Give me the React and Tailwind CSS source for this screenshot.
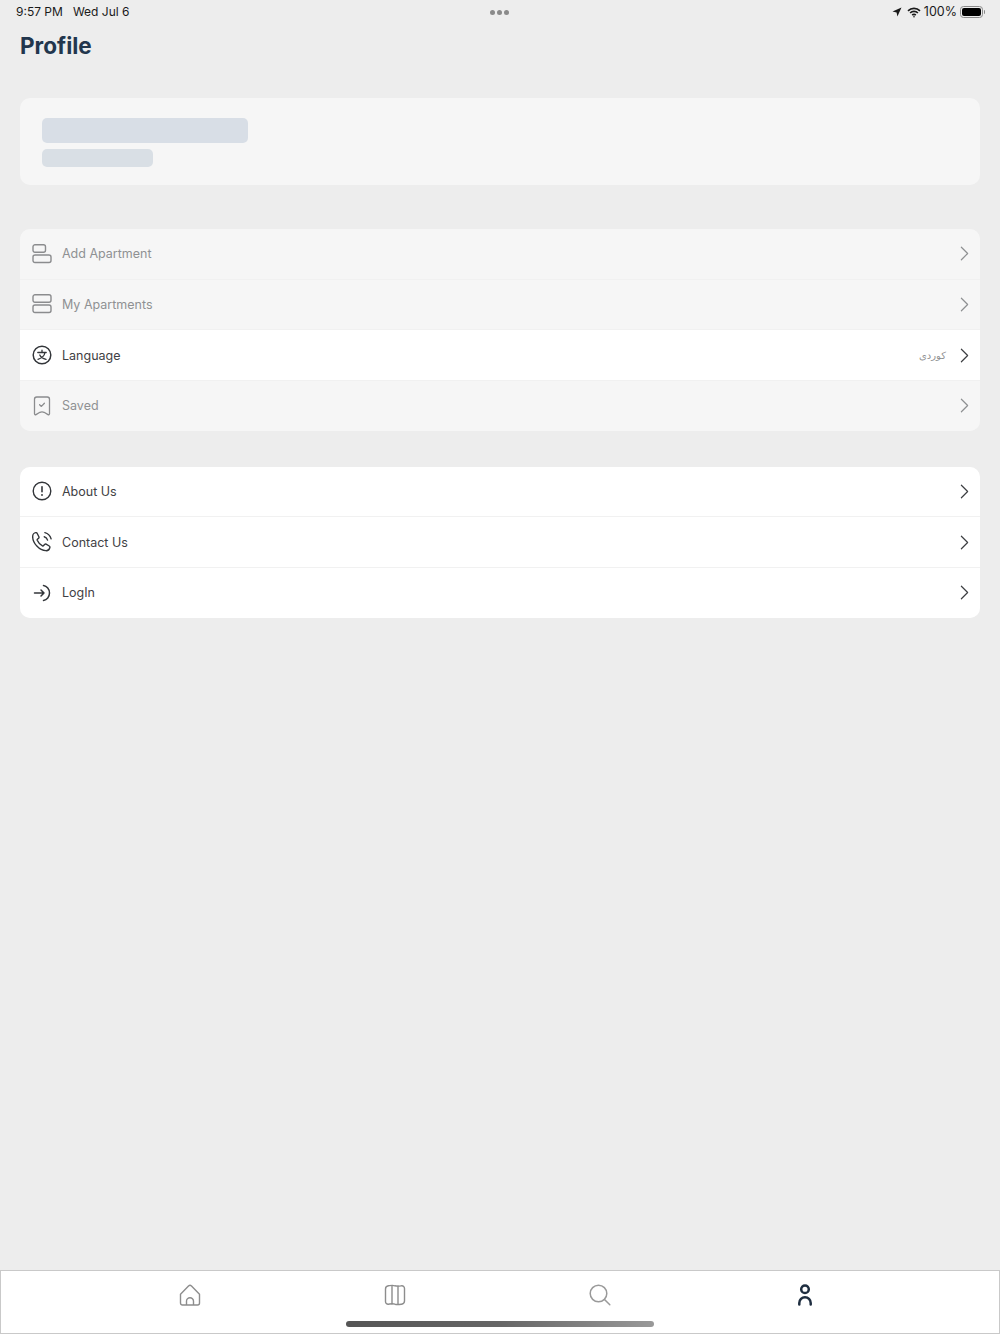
import React from "react";
import { ChevronRight } from "lucide-react";

const font = { fontFamily: "Inter, sans-serif" };

// Icons drawn to match the reference strokes
const AddIcon = () => (
  <svg width="20" height="20" viewBox="0 0 20 20" fill="none" stroke="currentColor" strokeWidth="1.4">
    <rect x="1" y="0.8" width="12.5" height="7.5" rx="2" />
    <rect x="1" y="11" width="18" height="7.5" rx="2" />
  </svg>
);
const ListIcon = () => (
  <svg width="20" height="20" viewBox="0 0 20 20" fill="none" stroke="currentColor" strokeWidth="1.4">
    <rect x="1" y="0.8" width="18" height="7.5" rx="2" />
    <rect x="1" y="11" width="18" height="7.5" rx="2" />
  </svg>
);
const LangIcon = () => (
  <svg width="20" height="20" viewBox="0 0 20 20" fill="none" stroke="currentColor" strokeWidth="1.5" strokeLinecap="round">
    <circle cx="10" cy="10" r="8.8" />
    <path d="M5.800 7.500h8.400M10 5.200v2.300M13 7.500c-.6 3.200-3 5.600-7 6.800M7.800 10c1 2.200 3.200 3.700 6.200 4.300" strokeWidth="1.300" />
  </svg>
);
const SavedIcon = () => (
  <svg width="20" height="20" viewBox="0 0 20 20" fill="none" stroke="currentColor" strokeWidth="1.3" strokeLinejoin="round" strokeLinecap="round">
    <path d="M2.500 3.200A2.200 2.200 0 0 1 4.700 1h10.600a2.200 2.200 0 0 1 2.200 2.200v14.600c0 .8-.8 1.200-1.500.8l-3.900-2.300a5 5 0 0 0-4.200 0l-3.900 2.300c-.7.400-1.500 0-1.500-.8z" />
    <path d="M7.600 8.800l1.800 1.600 3-3.200" />
  </svg>
);
const AboutIcon = () => (
  <svg width="20" height="20" viewBox="0 0 20 20" fill="none" stroke="currentColor" strokeWidth="1.4" strokeLinecap="round">
    <circle cx="10" cy="10" r="8.800" />
    <path d="M10 5.800v5" strokeWidth="1.600" />
    <path d="M10 13.800v.2" strokeWidth="1.800" />
  </svg>
);
const PhoneIcon = () => (
  <svg width="20" height="20" viewBox="1 1 18 18" fill="none" stroke="currentColor" strokeWidth="1.250" strokeLinecap="round" strokeLinejoin="round">
    <path d="M1.600 5.200C1.600 3 3.200 1.600 4.600 1.600c.5 0 .9.3 1.100.7l1.500 3c.2.500.1 1-.3 1.300l-1 .9c-.3.3-.3.700-.2 1 .9 2.100 2.600 3.900 4.700 4.900.4.2.8.1 1-.2l1-1c.4-.4.9-.4 1.300-.2l2.800 1.600c.5.3.7.8.6 1.200-.3 1.600-1.700 3.200-3.700 3C7.700 17.800 1.600 11 1.600 5.200z" />
    <path d="M12 5.300c1.500.5 2.600 1.600 3 3M12.600 1.600c2.700.8 4.800 2.900 5.600 5.600" />
  </svg>
);
const LoginIcon = () => (
  <svg width="20" height="20" viewBox="0 0 20 20" fill="none" stroke="currentColor" strokeWidth="1.500" strokeLinecap="round" strokeLinejoin="round">
    <path d="M2.500 10h9.500M9 7l3 3-3 3" />
    <path d="M11.500 2.600c3.400.5 6 3.600 6 7.400s-2.600 6.900-6 7.400" />
  </svg>
);

const HomeIcon = () => (
  <svg width="22" height="22" viewBox="0 0 22 22" fill="none" stroke="currentColor" strokeWidth="1.400" strokeLinejoin="round">
    <path d="M1.500 10.300 9.500 2c.9-.8 2.100-.8 3 0l8 8.300v8.800c0 1.100-.8 1.900-1.900 1.900H3.400c-1.100 0-1.900-.8-1.900-1.900z" />
    <path d="M7.500 21v-3.800a3.500 3.500 0 0 1 7 0V21" />
  </svg>
);
const MapIcon = () => (
  <svg width="22" height="22" viewBox="0 0 22 22" fill="none" stroke="currentColor" strokeWidth="1.400" strokeLinejoin="round">
    <path d="M1.500 5c0-1.800 1.200-3 3-3.200 2.300-.3 4.300-.8 6.500 0 2.200.6 4.200.3 6.500 0 1.800-.2 3 1 3 2.700v12.500c0 1.700-1.200 2.900-3 3.200-2.300.3-4.300.6-6.500 0-2.200-.8-4.200-.3-6.500 0-1.800.2-3-1-3-2.700z" />
    <path d="M8 1.500v19M14 1.500v19" />
  </svg>
);
const SearchIcon = () => (
  <svg width="22" height="22" viewBox="0 0 22 22" fill="none" stroke="currentColor" strokeWidth="1.500" strokeLinecap="round">
    <circle cx="9.500" cy="9.500" r="8.300" />
    <path d="M15.500 15.500 20.800 20.800" />
  </svg>
);
const UserIcon = () => (
  <svg width="22" height="22" viewBox="0 0 22 22" fill="none" stroke="currentColor" strokeWidth="2.500" strokeLinecap="round">
    <circle cx="11" cy="5.300" r="3.800" />
    <path d="M5.300 20.500v-1.500a5.700 5.700 0 0 1 11.400 0v1.500" />
  </svg>
);

const Row = ({ icon, label, muted, value, last }) => (
  <div
    className={`flex h-[49.67px] items-center pl-[12px] pr-[3.5px] ${muted ? "bg-[#f6f6f6] text-[#8f9193]" : "bg-white text-[#3f4144]"} ${last ? "" : "mb-[1px]"}`}
  >
    <div className={`flex w-[30px] shrink-0 ${muted ? "text-[#8b8c8e]" : "text-[#33363a]"}`}>{icon}</div>
    <span className="pt-[2px] text-[12.5px]">{label}</span>
    {value && <span className="ml-auto mr-[5.5px] text-[10px] text-[#8f9193]" style={{ fontFamily: "'DejaVu Sans', sans-serif" }}>{value}</span>}
    <ChevronRight size={25} strokeWidth={1.15} className={value ? "" : "ml-auto"} />
  </div>
);

export default function App() {
  return (
    <div className="relative flex h-[1334px] flex-col overflow-hidden bg-[#ededed]" style={font}>
      {/* Status bar */}
      <div className="relative flex h-[24px] shrink-0 items-center justify-between pl-[16px] pr-[15px] text-[12px] text-[#1a1a1a]">
        <div className="flex gap-[10px]">
          <span>9:57 PM</span>
          <span>Wed Jul 6</span>
        </div>
        <div className="absolute left-[490px] top-[10px] flex gap-[2px]">
          <span className="h-[5px] w-[5px] rounded-full bg-[#8a8a8a]" />
          <span className="h-[5px] w-[5px] rounded-full bg-[#8a8a8a]" />
          <span className="h-[5px] w-[5px] rounded-full bg-[#8a8a8a]" />
        </div>
        <div className="flex items-center gap-[3px]">
          <svg width="10" height="10" viewBox="0 0 10 10" className="mr-[2px]">
            <path d="M9.500.5 5.400 9.500 4.600 5.400.5 4.400z" fill="#1a1a1a" />
          </svg>
          <svg width="14" height="11" viewBox="0 0 14 11" fill="none" stroke="#1a1a1a" strokeWidth="1.600">
            <path d="M1 3.900a8.500 8.500 0 0 1 12 0M3.100 6a5.500 5.500 0 0 1 7.800 0M5.200 8.100a2.500 2.500 0 0 1 3.600 0" />
            <circle cx="7" cy="9.700" r=".8" fill="#1a1a1a" stroke="none" />
          </svg>
          <span className="text-[12.5px]">100%</span>
          <div className="flex items-center">
            <div className="flex h-[12px] w-[23px] items-center rounded-[3.500px] border border-[#8a8a8a] p-[1px]">
              <div className="h-full w-full rounded-[2px] bg-black" />
            </div>
            <div className="ml-[1px] h-[4px] w-[1px] rounded-r bg-[#8a8a8a]" />
          </div>
        </div>
      </div>

      {/* Main content */}
      <div className="flex min-h-0 flex-1 flex-col px-[20px]">
        <h1 className="mt-[6px] h-[32px] text-[22.5px] font-bold leading-[32px] text-[#22364d]">Profile</h1>

        <div className="mt-[36px] flex h-[87px] flex-col rounded-[10px] bg-[#f6f6f6] pl-[22px] pt-[20px]">
          <div className="h-[25px] w-[206px] rounded-[5px] bg-[#d8dee6]" />
          <div className="mt-[6px] h-[18px] w-[111px] rounded-[5px] bg-[#d9dfe5]" />
        </div>

        <div className="mt-[44px] flex flex-col overflow-hidden rounded-[10px] bg-[#f1f1f1]">
          <Row icon={<AddIcon />} label="Add Apartment" muted />
          <Row icon={<ListIcon />} label="My Apartments" muted />
          <Row icon={<LangIcon />} label="Language" value="کوردی" />
          <Row icon={<SavedIcon />} label="Saved" muted last />
        </div>

        <div className="mt-[36px] flex flex-col overflow-hidden rounded-[10px] bg-[#f1f1f1]">
          <Row icon={<AboutIcon />} label="About Us" />
          <Row icon={<PhoneIcon />} label="Contact Us" />
          <Row icon={<LoginIcon />} label="LogIn" last />
        </div>
      </div>

      {/* Tab bar */}
      <div className="relative grid h-[64px] shrink-0 grid-cols-4 border border-[#c9c9c9] bg-white pb-[14px] pl-[86px] pr-[92px]">
        <div className="flex items-center justify-center text-[#8d8d8d]"><HomeIcon /></div>
        <div className="flex items-center justify-center text-[#8d8d8d]"><MapIcon /></div>
        <div className="flex items-center justify-center text-[#9a9a9a]"><SearchIcon /></div>
        <div className="flex items-center justify-center text-[#1f2e40]"><UserIcon /></div>
        <div className="absolute bottom-[6px] left-[345px] h-[6px] w-[308px] rounded-full bg-gradient-to-r from-[#555555] via-[#666666] to-[#999999] blur-[0.5px]" />
      </div>
    </div>
  );
}
